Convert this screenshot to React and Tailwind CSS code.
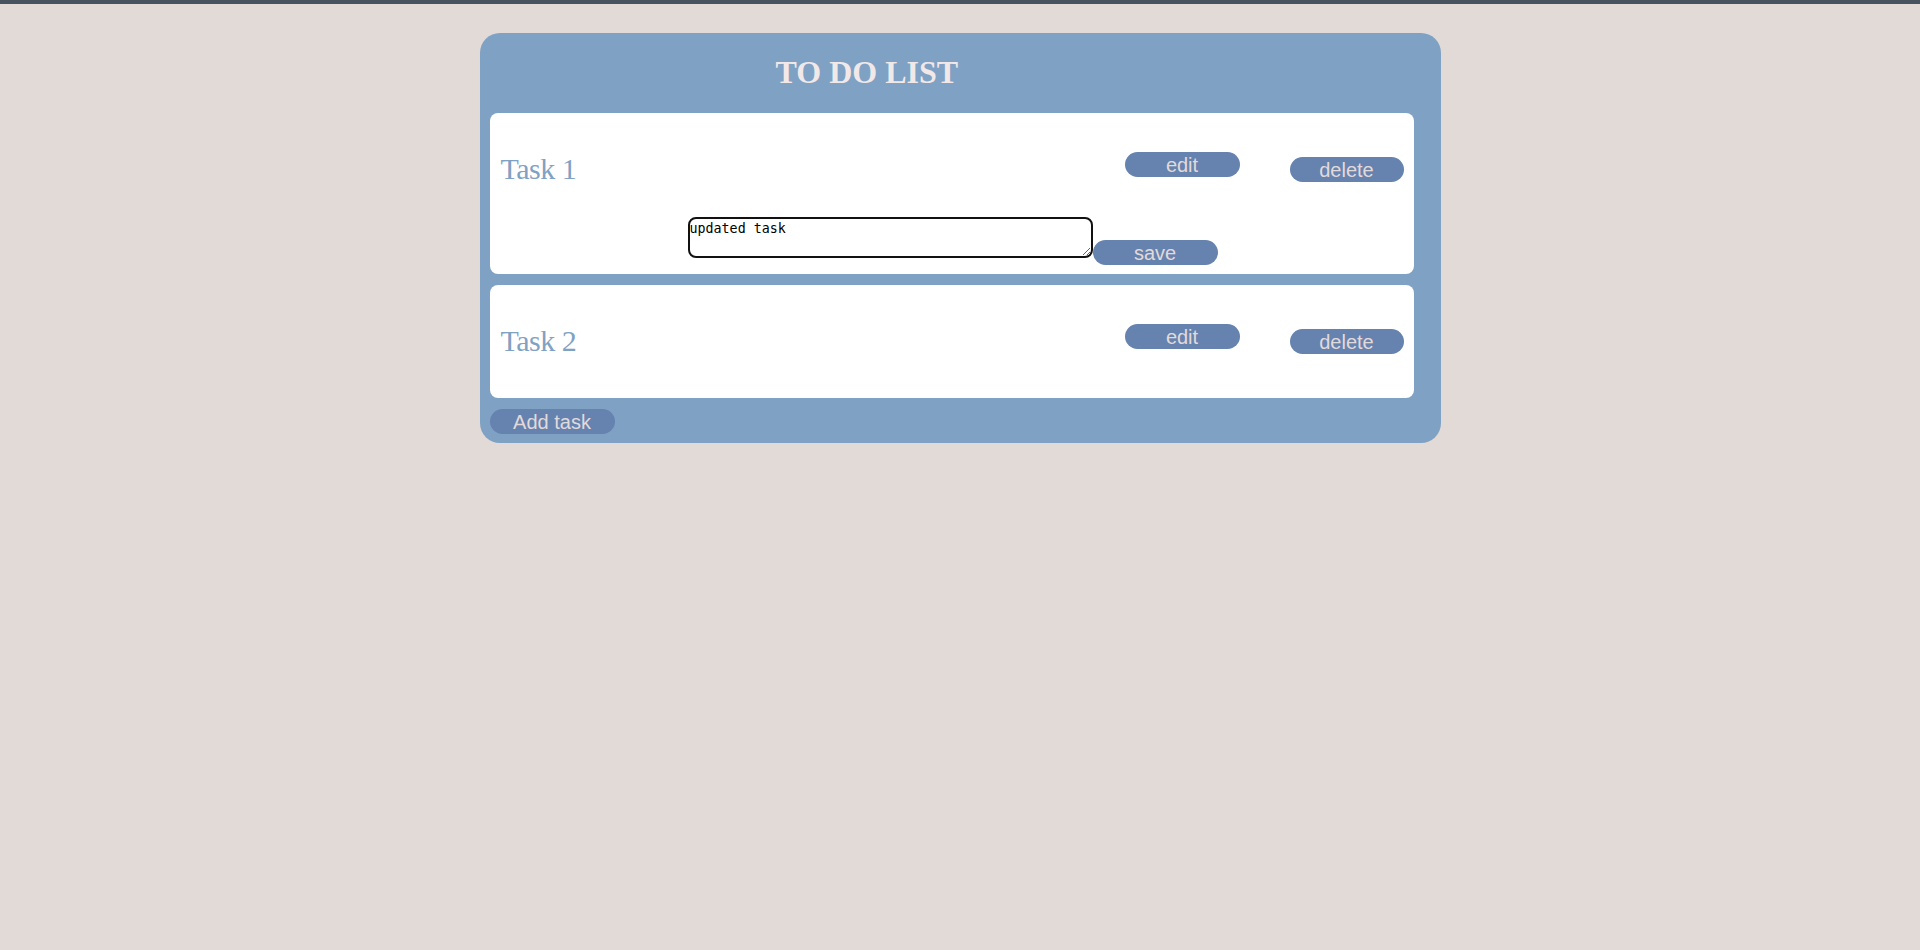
import React from 'react';

// --- small pieces ---

const PillButton = ({ children, className = '' }) => (
  <button
    className={`h-[25px] rounded-full bg-[#6682ae] text-[#e2dada] text-[20px] leading-none font-['Liberation_Sans',Arial,sans-serif] flex items-center justify-center ${className}`}
  >
    {children}
  </button>
);

const TaskRow = ({ title }) => (
  <div className="flex items-start pl-[11px]">
    <div className="w-[624px] mt-[40px] text-[30px] leading-8 tracking-[-0.5px] text-[#7fa1c4] font-['Liberation_Serif','Times_New_Roman',serif]">
      {title}
    </div>
    <PillButton className="w-[115px] mt-[39px]">edit</PillButton>
    <PillButton className="w-[114px] mt-[44px] ml-[50px]">delete</PillButton>
  </div>
);

const TaskItem = ({ title, editing, height }) => (
  <div className={`w-[924px] bg-white rounded-[8px] ${height}`}>
    <div className="h-[104px]">
      <TaskRow title={title} />
    </div>
    {editing && (
      <div className="flex items-start pl-[198px]">
        <textarea
          defaultValue="updated task"
          className="w-[405px] h-[41px] border-2 border-[#111] rounded-[8px] px-0 py-[2px] text-[13.33px] leading-[16px] text-black font-['DejaVu_Sans_Mono',monospace] outline-none"
        />
        <PillButton className="w-[125px] mt-[23px]">save</PillButton>
      </div>
    )}
  </div>
);

export default function App() {
  return (
    <div className="min-h-screen bg-[#e2dad7]">
      <div className="h-[4px] bg-[#46545f]" />
      <div className="pt-[29px]">
        <div className="w-[961px] mx-auto bg-[#7fa1c4] rounded-[20px] pl-[10px] pb-[9px]">
          <div className="h-[80px] pt-[23px] pl-[286px]">
            <h1 className="text-[32px] leading-8 font-bold text-[#f2e8e8] font-['Liberation_Serif','Times_New_Roman',serif]">
              TO DO LIST
            </h1>
          </div>
          <div className="flex flex-col gap-[11px]">
            <TaskItem title="Task 1" editing height="h-[161px]" />
            <TaskItem title="Task 2" height="h-[113px]" />
          </div>
          <PillButton className="w-[125px] mt-[11px]">Add task</PillButton>
        </div>
      </div>
    </div>
  );
}
